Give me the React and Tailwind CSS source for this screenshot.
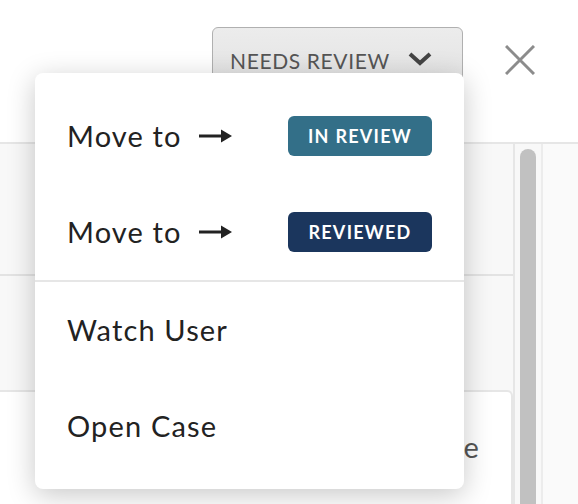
import React from 'react'

const ArrowRight = () => (
  <svg width="33" height="14" viewBox="0 0 33 14" className="ml-[17px]">
    <rect x="0" y="5.5" width="24" height="3" fill="#222" />
    <path d="M22 0.5 L33 7 L22 13.5 Z" fill="#222" />
  </svg>
)

const StatusBadge = ({ label, colour }) => (
  <span
    className={`flex h-[40px] w-[144px] items-center justify-center rounded-[6px] text-[18px] font-bold tracking-[0.07em] text-white ${colour}`}
  >
    {label}
  </span>
)

const MenuRow = ({ children }) => (
  <div className="flex h-[96px] items-center justify-between pl-[32px] pr-[32px] text-[29px] tracking-[0.04em] text-[#222]">
    {children}
  </div>
)

const StatusMenu = () => (
  <div className="absolute left-[35px] top-[73px] w-[429px] rounded-[8px] bg-white py-[15px] shadow-[0_6px_28px_rgba(0,0,0,0.22)]">
    <MenuRow>
      <span className="flex items-center">
        Move to
        <ArrowRight />
      </span>
      <StatusBadge label="IN REVIEW" colour="bg-[#336f88]" />
    </MenuRow>
    <MenuRow>
      <span className="flex items-center">
        Move to
        <ArrowRight />
      </span>
      <StatusBadge label="REVIEWED" colour="bg-[#1b365d]" />
    </MenuRow>
    <div className="h-[2px] bg-[#e6e6e6]" />
    <MenuRow>
      <span>Watch User</span>
    </MenuRow>
    <MenuRow>
      <span>Open Case</span>
    </MenuRow>
  </div>
)

export default function App() {
  return (
    <div className="relative h-[504px] w-[578px] overflow-hidden bg-white font-['Lato',sans-serif]">
      <header className="flex h-[144px] items-start border-b-2 border-[#e6e6e6] pl-[212px] pt-[27px]">
        <button
          type="button"
          className="flex h-[64px] w-[251px] items-start rounded-[6px] border-[1.5px] border-[#b0b0b0] bg-gradient-to-b from-[#ececec] to-[#e2e2e2] pl-[17px] pt-[17px] text-[21px] tracking-[0.03em] text-[#555]"
        >
          NEEDS REVIEW
          <svg width="26" height="16" viewBox="0 0 26 16" className="ml-[17px] mt-[6px]">
            <path d="M3 3 L13 12 L23 3" fill="none" stroke="#444" strokeWidth="4" />
          </svg>
        </button>
        <button type="button" className="ml-[42px] mt-[18px]" aria-label="Close">
          <svg width="30" height="30" viewBox="0 0 30 30">
            <path d="M1 1 L29 29 M29 1 L1 29" stroke="#8c8c8c" strokeWidth="3" />
          </svg>
        </button>
      </header>
      <div className="flex h-[360px]">
        <div className="flex w-[515px] flex-col border-r-2 border-[#e6e6e6] bg-[#f8f8f8]">
          <div className="h-[132px] border-b-2 border-[#e3e3e3]" />
          <div className="h-[114px]" />
          <div className="flex-1 rounded-tr-[6px] border-r-2 border-t-2 border-[#e6e6e6] bg-white pr-[31px] pt-[33px] text-right text-[29px] tracking-[0.04em] text-[#555]">
            Close
          </div>
        </div>
        <div className="w-[28px] border-r-2 border-[#ececec] bg-[#f8f8f8] pl-[5px] pt-[5px]">
          <div className="h-full w-[16px] rounded-t-full bg-[#c1c1c1]" />
        </div>
        <div className="flex-1 bg-[#fafafa]" />
      </div>
      <StatusMenu />
    </div>
  )
}
